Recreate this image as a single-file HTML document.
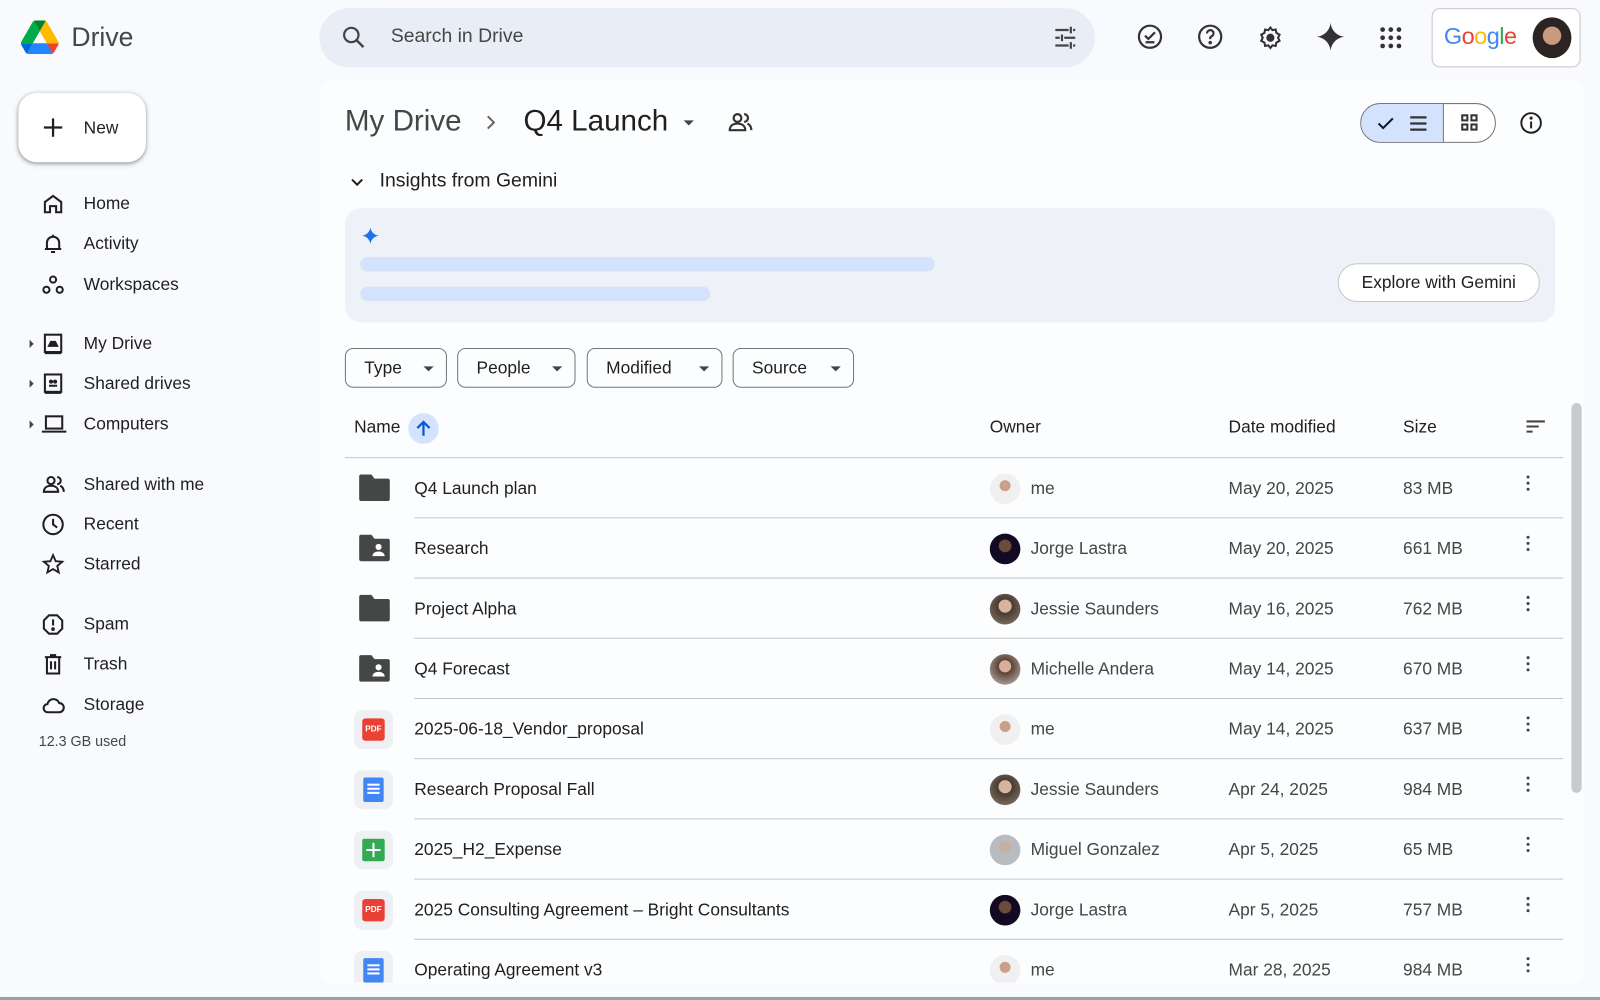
<!DOCTYPE html>
<html><head><meta charset="utf-8">
<style>
*{box-sizing:border-box;margin:0;padding:0}
html,body{width:1600px;height:1000px;overflow:hidden;background:#f8fafd;font-family:"Liberation Sans",Arial,sans-serif;color:#1f1f1f}
#s{position:absolute;left:0;top:0;width:1568px;height:980px;transform:scale(1.0204);transform-origin:0 0;background:#f8fafd}
.a{position:absolute}
.nav{position:absolute;left:40px;font-size:17px;color:#1f1f1f}
.nav svg{position:absolute;left:0;top:-2px}
.nav span{position:absolute;left:42px;top:0;white-space:nowrap}
.tri{position:absolute;left:-11px;top:6px;width:0;height:0;border-top:4px solid transparent;border-bottom:4px solid transparent;border-left:4px solid #444}
.chip{position:absolute;top:341px;height:39px;border:1px solid #747775;border-radius:8px;font-size:17px;line-height:37px;padding-left:18px;color:#1f1f1f}
.chip:after{content:"";position:absolute;right:12px;top:17px;border-left:5px solid transparent;border-right:5px solid transparent;border-top:5px solid #444}
.row{position:absolute;left:338px;width:1194px;height:59px;font-size:17px}
.row .ln{position:absolute;left:68px;right:0;bottom:0;height:1px;background:#c4c7c5}
.row .nm{position:absolute;left:68px;top:20px;white-space:nowrap}
.row .ic{position:absolute;left:12px;top:14px}
.row .av{position:absolute;left:632px;top:15px;width:30px;height:30px;border-radius:50%}
.row .ow{position:absolute;left:672px;top:20px;color:#444746}
.row .dt{position:absolute;left:866px;top:20px;color:#444746}
.row .sz{position:absolute;left:1037px;top:20px;color:#444746}
.row .kb{position:absolute;left:1158px;top:17px;width:3px}
.kb i{display:block;width:3px;height:3px;background:#444;border-radius:50%;margin-bottom:3px}
</style></head><body><div id="s">

<!-- logo -->
<svg class="a" style="left:20px;top:20px" width="38" height="33" viewBox="0 0 87.3 78">
<path d="M6.6 66.85l3.85 6.65c.8 1.4 1.95 2.5 3.3 3.3L27.5 53H0c0 1.55.4 3.1 1.2 4.5z" fill="#0066da"/>
<path d="M43.65 25L29.9 1.2c-1.35.8-2.5 1.9-3.3 3.3L1.2 48.5C.4 49.9 0 51.45 0 53h27.5z" fill="#00ac47"/>
<path d="M73.55 76.8c1.35-.8 2.5-1.9 3.3-3.3l1.6-2.75 7.65-13.25c.8-1.4 1.2-2.95 1.2-4.5H59.8l5.85 11.5z" fill="#ea4335"/>
<path d="M43.65 25L57.4 1.2C56.05.4 54.5 0 52.9 0H34.4c-1.6 0-3.15.45-4.5 1.2z" fill="#00832d"/>
<path d="M59.8 53H27.5L13.75 76.8c1.35.8 2.9 1.2 4.5 1.2h50.8c1.6 0 3.15-.45 4.5-1.2z" fill="#2684fc"/>
<path d="M73.4 26.5L60.7 4.5c-.8-1.4-1.95-2.5-3.3-3.3L43.65 25 59.8 53h27.45c0-1.55-.4-3.1-1.2-4.5z" fill="#ffba00"/>
</svg>
<div class="a" style="left:70px;top:21px;font-size:26px;color:#444746">Drive</div>

<!-- search -->
<div class="a" style="left:313px;top:8px;width:760px;height:58px;background:#e9eef6;border-radius:29px"></div>
<svg class="a" style="left:334px;top:24px" width="26" height="26" viewBox="0 0 24 24"><circle cx="9.5" cy="9.5" r="6.5" fill="none" stroke="#444" stroke-width="2"/><path d="M14.5 14.5l6 6" stroke="#444" stroke-width="2.2"/></svg>
<div class="a" style="left:383px;top:25px;font-size:19px;color:#444746">Search in Drive</div>
<svg class="a" style="left:1031px;top:24px" width="26" height="26" viewBox="0 0 24 24" stroke="#444" stroke-width="2" fill="none"><path d="M3 5h12M19 5h2M17 2v6M3 12h4M11 12h10M9 9v6M3 19h12M19 19h2M17 16v6"/></svg>

<!-- top icons -->
<svg class="a" style="left:1114px;top:23px" width="26" height="26" viewBox="0 0 24 24" fill="none" stroke="#333" stroke-width="2"><circle cx="12" cy="12" r="10"/><path d="M7.5 11l3 3 6-6M8 17h8"/></svg>
<svg class="a" style="left:1173px;top:23px" width="26" height="26" viewBox="0 0 24 24" fill="none" stroke="#333" stroke-width="2"><circle cx="12" cy="12" r="10"/><path d="M9.2 9a2.9 2.9 0 1 1 4 2.6c-.8.4-1.2 1-1.2 2v.6"/><circle cx="12" cy="17.3" r=".6" fill="#333"/></svg>
<svg class="a" style="left:1233px;top:25px" width="24" height="24" viewBox="0 0 24 24" fill="none" stroke="#333" stroke-width="2"><path d="M12 2l2 2.5 3.2-.5.6 3.2L21 9l-1.5 3L21 15l-3.2 1.8-.6 3.2-3.2-.5L12 22l-2-2.5-3.2.5-.6-3.2L3 15l1.5-3L3 9l3.2-1.8.6-3.2 3.2.5z"/><circle cx="12" cy="12" r="3" fill="#333"/></svg>
<svg class="a" style="left:1289px;top:21px" width="30" height="30" viewBox="0 0 24 24"><path d="M12 1C12.6 7 17 11.4 23 12 17 12.6 12.6 17 12 23 11.4 17 7 12.6 1 12 7 11.4 11.4 7 12 1z" fill="#333"/></svg>
<svg class="a" style="left:1352px;top:26px" width="22" height="22" viewBox="0 0 22 22" fill="#333"><circle cx="3" cy="3" r="2.3"/><circle cx="11" cy="3" r="2.3"/><circle cx="19" cy="3" r="2.3"/><circle cx="3" cy="11" r="2.3"/><circle cx="11" cy="11" r="2.3"/><circle cx="19" cy="11" r="2.3"/><circle cx="3" cy="19" r="2.3"/><circle cx="11" cy="19" r="2.3"/><circle cx="19" cy="19" r="2.3"/></svg>
<div class="a" style="left:1403px;top:8px;width:146px;height:58px;border:1px solid #c7c7c7;border-radius:8px;background:#fff"></div>
<div class="a" style="left:1415px;top:22px;font-size:23px;letter-spacing:-0.5px"><span style="color:#4285f4">G</span><span style="color:#ea4335">o</span><span style="color:#fbbc05">o</span><span style="color:#4285f4">g</span><span style="color:#34a853">l</span><span style="color:#ea4335">e</span></div>
<div class="a" style="left:1502px;top:17px;width:38px;height:40px;border-radius:50%;background:radial-gradient(circle at 50% 45%,#c99a7f 0 30%,#2a2522 32% 100%)"></div>

<!-- New button -->
<div class="a" style="left:18px;top:91px;width:125px;height:68px;background:#fff;border-radius:18px;box-shadow:0 1px 3px rgba(0,0,0,.3),0 2px 6px rgba(0,0,0,.15)"></div>
<svg class="a" style="left:41px;top:114px" width="22" height="22" viewBox="0 0 22 22"><path d="M11 2v18M2 11h18" stroke="#1f1f1f" stroke-width="2.2"/></svg>
<div class="a" style="left:82px;top:116px;font-size:17px">New</div>

<!-- sidebar -->
<div class="nav" style="top:190px"><svg width="24" height="24" viewBox="0 0 24 24" fill="none" stroke="#1f1f1f" stroke-width="2"><path d="M4 20V10l8-6 8 6v10h-5v-6H9v6z"/></svg><span>Home</span></div>
<div class="nav" style="top:229px"><svg width="24" height="24" viewBox="0 0 24 24" fill="none" stroke="#1f1f1f" stroke-width="2"><path d="M6 17V11a6 6 0 0 1 12 0v6M4 17h16M10 20h4M12 3v2"/></svg><span>Activity</span></div>
<div class="nav" style="top:269px"><svg width="24" height="24" viewBox="0 0 24 24" fill="none" stroke="#1f1f1f" stroke-width="2"><circle cx="12" cy="7" r="3"/><circle cx="5.5" cy="17" r="3"/><circle cx="18.5" cy="17" r="3"/></svg><span>Workspaces</span></div>
<div class="nav" style="top:327px"><i class="tri"></i><svg width="24" height="24" viewBox="0 0 24 24" fill="none" stroke="#1f1f1f" stroke-width="2"><rect x="4" y="3" width="16" height="17"/><path d="M4 21h16"/><path d="M8 14h8l-2-4h-4z" fill="#1f1f1f"/></svg><span>My Drive</span></div>
<div class="nav" style="top:366px"><i class="tri"></i><svg width="24" height="24" viewBox="0 0 24 24" fill="none" stroke="#1f1f1f" stroke-width="2"><rect x="4" y="3" width="16" height="17"/><path d="M4 21h16M8 14h8"/><circle cx="10" cy="10" r="1" fill="#1f1f1f"/><circle cx="14" cy="10" r="1" fill="#1f1f1f"/></svg><span>Shared drives</span></div>
<div class="nav" style="top:406px"><i class="tri"></i><svg width="26" height="24" viewBox="0 0 26 24" fill="none" stroke="#1f1f1f" stroke-width="2"><rect x="5" y="4" width="16" height="12"/><path d="M1 19h24"/></svg><span>Computers</span></div>
<div class="nav" style="top:465px"><svg width="26" height="24" viewBox="0 0 26 24" fill="none" stroke="#1f1f1f" stroke-width="2"><circle cx="10" cy="8" r="3.5"/><path d="M3 19c0-4 3-6 7-6s7 2 7 6zM16 4.5a3.5 3.5 0 0 1 0 7M19 13c2 1 3.5 3 3.5 6"/></svg><span>Shared with me</span></div>
<div class="nav" style="top:504px"><svg width="24" height="24" viewBox="0 0 24 24" fill="none" stroke="#1f1f1f" stroke-width="2"><circle cx="12" cy="12" r="9.5"/><path d="M12 6.5V12l4 3"/></svg><span>Recent</span></div>
<div class="nav" style="top:543px"><svg width="24" height="24" viewBox="0 0 24 24" fill="none" stroke="#1f1f1f" stroke-width="1.8"><path d="M12 3l2.6 6 6.4.5-4.9 4.2 1.5 6.3L12 16.7 6.4 20l1.5-6.3L3 9.5 9.4 9z"/></svg><span>Starred</span></div>
<div class="nav" style="top:602px"><svg width="24" height="24" viewBox="0 0 24 24" fill="none" stroke="#1f1f1f" stroke-width="2"><path d="M8 3h8l5 5v8l-5 5H8l-5-5V8z"/><path d="M12 7v6"/><circle cx="12" cy="16.5" r=".8" fill="#1f1f1f"/></svg><span>Spam</span></div>
<div class="nav" style="top:641px"><svg width="24" height="24" viewBox="0 0 24 24" fill="none" stroke="#1f1f1f" stroke-width="2"><path d="M4 5h16M9 3h6M6 5v16h12V5M10 9v8M14 9v8"/></svg><span>Trash</span></div>
<div class="nav" style="top:681px"><svg width="24" height="24" viewBox="0 0 24 24" fill="none" stroke="#1f1f1f" stroke-width="2"><path d="M7 19a4 4 0 0 1-.5-8A6 6 0 0 1 18 10a4.5 4.5 0 0 1 0 9z"/></svg><span>Storage</span></div>
<div class="a" style="left:38px;top:718px;font-size:14px;color:#444746">12.3 GB used</div>

<!-- main panel -->
<div class="a" style="left:313px;top:78px;width:1240px;height:886px;background:#fcfdfe;border-radius:16px"></div>
<div class="a" style="left:338px;top:103px;font-size:29px;color:#444746">My Drive</div>
<svg class="a" style="left:473px;top:110px" width="16" height="20" viewBox="0 0 16 20"><path d="M5 4l6 6-6 6" fill="none" stroke="#666" stroke-width="2"/></svg>
<div class="a" style="left:513px;top:103px;font-size:29px;color:#1f1f1f">Q4 Launch</div>
<div class="a" style="left:670px;top:118px;border-left:5px solid transparent;border-right:5px solid transparent;border-top:5px solid #444"></div>
<svg class="a" style="left:711px;top:107px" width="30" height="26" viewBox="0 0 26 24" fill="none" stroke="#333" stroke-width="2"><circle cx="10" cy="8" r="3.5"/><path d="M3 19c0-4 3-6 7-6s7 2 7 6zM16 4.5a3.5 3.5 0 0 1 0 7M19 13c2 1 3.5 3 3.5 6"/></svg>

<!-- view toggle -->
<div class="a" style="left:1333px;top:101px;width:133px;height:39px;border:1px solid #747775;border-radius:20px;overflow:hidden;background:#fff">
<div style="position:absolute;left:0;top:0;width:81px;height:39px;background:#d3e3fd;border-right:1px solid #747775"></div></div>
<svg class="a" style="left:1348px;top:111px" width="20" height="20" viewBox="0 0 20 20"><path d="M3 10l4.5 4.5L17 5" fill="none" stroke="#0b1b35" stroke-width="2"/></svg>
<svg class="a" style="left:1380px;top:111px" width="20" height="20" viewBox="0 0 20 20"><path d="M2 4h16M2 10h16M2 16h16" stroke="#333" stroke-width="2.2"/></svg>
<svg class="a" style="left:1431px;top:111px" width="18" height="18" viewBox="0 0 18 18" fill="none" stroke="#333" stroke-width="2"><rect x="2" y="2" width="5" height="5"/><rect x="11" y="2" width="5" height="5"/><rect x="2" y="11" width="5" height="5"/><rect x="11" y="11" width="5" height="5"/></svg>
<svg class="a" style="left:1489px;top:109px" width="23" height="23" viewBox="0 0 24 24" fill="none" stroke="#1f1f1f" stroke-width="2"><circle cx="12" cy="12" r="10"/><path d="M12 10.5v7"/><circle cx="12" cy="7" r=".6" fill="#1f1f1f"/></svg>

<!-- gemini -->
<svg class="a" style="left:341px;top:171px" width="18" height="16" viewBox="0 0 18 16"><path d="M4 5l5 5 5-5" fill="none" stroke="#1f1f1f" stroke-width="2"/></svg>
<div class="a" style="left:372px;top:167px;font-size:19px">Insights from Gemini</div>
<div class="a" style="left:338px;top:204px;width:1186px;height:112px;background:#eef2f8;border-radius:16px"></div>
<svg class="a" style="left:354px;top:222px" width="18" height="18" viewBox="0 0 24 24"><path d="M12 1C12.6 7 17 11.4 23 12 17 12.6 12.6 17 12 23 11.4 17 7 12.6 1 12 7 11.4 11.4 7 12 1z" fill="#1a73e8"/></svg>
<div class="a" style="left:353px;top:252px;width:563px;height:14px;background:#d3e3fd;border-radius:7px"></div>
<div class="a" style="left:353px;top:281px;width:343px;height:14px;background:#d3e3fd;border-radius:7px"></div>
<div class="a" style="left:1311px;top:258px;width:198px;height:38px;border:1px solid #c4c7c5;border-radius:19px;background:#fff;font-size:17px;line-height:36px;text-align:center">Explore with Gemini</div>

<!-- chips -->
<div class="chip" style="left:338px;width:100px">Type</div>
<div class="chip" style="left:448px;width:116px">People</div>
<div class="chip" style="left:575px;width:133px">Modified</div>
<div class="chip" style="left:718px;width:119px">Source</div>

<!-- header -->
<div class="a" style="left:347px;top:409px;font-size:17px">Name</div>
<div class="a" style="left:400px;top:405px;width:30px;height:30px;border-radius:50%;background:#d3e3fd"></div>
<svg class="a" style="left:405px;top:410px" width="20" height="20" viewBox="0 0 20 20"><path d="M10 17V4M4 9.5L10 3.5l6 6" fill="none" stroke="#0b57d0" stroke-width="2.2"/></svg>
<div class="a" style="left:970px;top:409px;font-size:17px;color:#1f1f1f">Owner</div>
<div class="a" style="left:1204px;top:409px;font-size:17px">Date modified</div>
<div class="a" style="left:1375px;top:409px;font-size:17px">Size</div>
<svg class="a" style="left:1495px;top:411px" width="20" height="16" viewBox="0 0 20 16"><path d="M1 2h18M1 7h12M1 12h6" stroke="#444" stroke-width="2"/></svg>
<div class="a" style="left:338px;top:448px;width:1194px;height:1px;background:#c4c7c5"></div>
<div class="a" style="left:1540px;top:395px;width:10px;height:382px;background:#c8cacc;border-radius:5px"></div>

<!-- rows -->
<div class="row" style="top:449px"><svg class="ic" width="34" height="30" viewBox="0 0 34 30"><path d="M2 4a2 2 0 0 1 2-2h10l3 4h13a2 2 0 0 1 2 2v18a2 2 0 0 1-2 2H4a2 2 0 0 1-2-2z" fill="#444746"/></svg><span class="nm">Q4 Launch plan</span><div class="av" style="background:radial-gradient(circle at 50% 40%,#c9a08a 0 22%,#f0f0f0 24%)"></div><span class="ow">me</span><span class="dt">May 20, 2025</span><span class="sz">83 MB</span><div class="kb"><i></i><i></i><i></i></div><div class="ln"></div></div>
<div class="row" style="top:508px"><svg class="ic" width="34" height="30" viewBox="0 0 34 30"><path d="M2 4a2 2 0 0 1 2-2h10l3 4h13a2 2 0 0 1 2 2v18a2 2 0 0 1-2 2H4a2 2 0 0 1-2-2z" fill="#444746"/><circle cx="21" cy="14" r="3" fill="#fff"/><path d="M15 23c0-3 3-4.5 6-4.5s6 1.5 6 4.5z" fill="#fff"/></svg><span class="nm">Research</span><div class="av" style="background:radial-gradient(circle at 50% 40%,#6b4b3a 0 25%,#120a22 28%)"></div><span class="ow">Jorge Lastra</span><span class="dt">May 20, 2025</span><span class="sz">661 MB</span><div class="kb"><i></i><i></i><i></i></div><div class="ln"></div></div>
<div class="row" style="top:567px"><svg class="ic" width="34" height="30" viewBox="0 0 34 30"><path d="M2 4a2 2 0 0 1 2-2h10l3 4h13a2 2 0 0 1 2 2v18a2 2 0 0 1-2 2H4a2 2 0 0 1-2-2z" fill="#444746"/></svg><span class="nm">Project Alpha</span><div class="av" style="background:radial-gradient(circle at 50% 40%,#d5b59e 0 26%,#4a3a30 29%,#8a8070)"></div><span class="ow">Jessie Saunders</span><span class="dt">May 16, 2025</span><span class="sz">762 MB</span><div class="kb"><i></i><i></i><i></i></div><div class="ln"></div></div>
<div class="row" style="top:626px"><svg class="ic" width="34" height="30" viewBox="0 0 34 30"><path d="M2 4a2 2 0 0 1 2-2h10l3 4h13a2 2 0 0 1 2 2v18a2 2 0 0 1-2 2H4a2 2 0 0 1-2-2z" fill="#444746"/><circle cx="21" cy="14" r="3" fill="#fff"/><path d="M15 23c0-3 3-4.5 6-4.5s6 1.5 6 4.5z" fill="#fff"/></svg><span class="nm">Q4 Forecast</span><div class="av" style="background:radial-gradient(circle at 50% 40%,#d8b09a 0 24%,#5a4236 27%,#c8c0b8)"></div><span class="ow">Michelle Andera</span><span class="dt">May 14, 2025</span><span class="sz">670 MB</span><div class="kb"><i></i><i></i><i></i></div><div class="ln"></div></div>
<div class="row" style="top:685px"><div class="ic" style="left:9px;top:11px;width:38px;height:38px;background:#eef0f3;border-radius:8px"><div style="position:absolute;left:8px;top:8px;width:22px;height:22px;background:#e94235;border-radius:3px;color:#fff;font-size:8px;font-weight:bold;line-height:22px;text-align:center">PDF</div></div><span class="nm">2025-06-18_Vendor_proposal</span><div class="av" style="background:radial-gradient(circle at 50% 40%,#c9a08a 0 22%,#f0f0f0 24%)"></div><span class="ow">me</span><span class="dt">May 14, 2025</span><span class="sz">637 MB</span><div class="kb"><i></i><i></i><i></i></div><div class="ln"></div></div>
<div class="row" style="top:744px"><div class="ic" style="left:9px;top:11px;width:38px;height:38px;background:#eef0f3;border-radius:8px"><div style="position:absolute;left:9px;top:7px;width:20px;height:24px;background:#4285f4;border-radius:2px"></div><div style="position:absolute;left:13px;top:13px;width:12px;height:2px;background:#fff;box-shadow:0 4px 0 #fff,0 8px 0 #fff"></div></div><span class="nm">Research Proposal Fall</span><div class="av" style="background:radial-gradient(circle at 50% 40%,#d5b59e 0 26%,#4a3a30 29%,#8a8070)"></div><span class="ow">Jessie Saunders</span><span class="dt">Apr 24, 2025</span><span class="sz">984 MB</span><div class="kb"><i></i><i></i><i></i></div><div class="ln"></div></div>
<div class="row" style="top:803px"><div class="ic" style="left:9px;top:11px;width:38px;height:38px;background:#eef0f3;border-radius:8px"><div style="position:absolute;left:8px;top:8px;width:22px;height:22px;background:#34a853;border-radius:2px"></div><div style="position:absolute;left:18px;top:12px;width:2px;height:14px;background:#fff"></div><div style="position:absolute;left:12px;top:18px;width:14px;height:2px;background:#fff"></div></div><span class="nm">2025_H2_Expense</span><div class="av" style="background:radial-gradient(circle at 50% 40%,#c8b0a0 0 24%,#b8bcc0 27%)"></div><span class="ow">Miguel Gonzalez</span><span class="dt">Apr 5, 2025</span><span class="sz">65 MB</span><div class="kb"><i></i><i></i><i></i></div><div class="ln"></div></div>
<div class="row" style="top:862px"><div class="ic" style="left:9px;top:11px;width:38px;height:38px;background:#eef0f3;border-radius:8px"><div style="position:absolute;left:8px;top:8px;width:22px;height:22px;background:#e94235;border-radius:3px;color:#fff;font-size:8px;font-weight:bold;line-height:22px;text-align:center">PDF</div></div><span class="nm">2025 Consulting Agreement – Bright Consultants</span><div class="av" style="background:radial-gradient(circle at 50% 40%,#6b4b3a 0 25%,#120a22 28%)"></div><span class="ow">Jorge Lastra</span><span class="dt">Apr 5, 2025</span><span class="sz">757 MB</span><div class="kb"><i></i><i></i><i></i></div><div class="ln"></div></div>
<div class="row" style="top:921px;height:42px;overflow:hidden"><div class="ic" style="left:9px;top:11px;width:38px;height:38px;background:#eef0f3;border-radius:8px"><div style="position:absolute;left:9px;top:7px;width:20px;height:24px;background:#4285f4;border-radius:2px"></div><div style="position:absolute;left:13px;top:13px;width:12px;height:2px;background:#fff;box-shadow:0 4px 0 #fff,0 8px 0 #fff"></div></div><span class="nm">Operating Agreement v3</span><div class="av" style="background:radial-gradient(circle at 50% 40%,#c9a08a 0 22%,#f0f0f0 24%)"></div><span class="ow">me</span><span class="dt">Mar 28, 2025</span><span class="sz">984 MB</span><div class="kb"><i></i><i></i><i></i></div></div>

<div class="a" style="left:0;top:977px;width:1568px;height:3px;background:#9aa0a6"></div>
</div></body></html>
